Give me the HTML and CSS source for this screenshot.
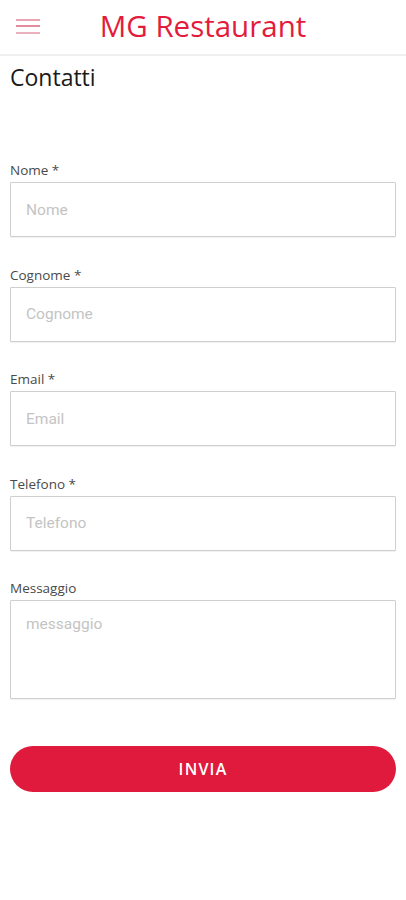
FILE: index.html
```html
<!DOCTYPE html>
<html lang="it">
<head>
<meta charset="utf-8">
<title>MG Restaurant - Contatti</title>
<link rel="stylesheet" href="styles.css">
</head>
<body>
<header class="topbar">
  <button class="menu-btn" aria-label="Menu">
    <svg width="24" height="16" viewBox="0 0 24 16"><rect x="0" y="0" width="24" height="2" fill="#e9a3b2"/><rect x="0" y="6" width="24" height="2" fill="#e38a9d"/><rect x="0" y="13" width="24" height="2" fill="#eab0bd"/></svg>
  </button>
  <h1 class="brand">MG Restaurant</h1>
</header>
<main class="page">
  <h2 class="page-title">Contatti</h2>
  <form class="contact-form">
    <div class="field">
      <label class="field-label">Nome *</label>
      <input class="field-input" type="text" placeholder="Nome">
    </div>
    <div class="field">
      <label class="field-label">Cognome *</label>
      <input class="field-input" type="text" placeholder="Cognome">
    </div>
    <div class="field">
      <label class="field-label">Email *</label>
      <input class="field-input" type="email" placeholder="Email">
    </div>
    <div class="field">
      <label class="field-label">Telefono *</label>
      <input class="field-input" type="tel" placeholder="Telefono">
    </div>
    <div class="field">
      <label class="field-label">Messaggio</label>
      <textarea class="field-input field-textarea" placeholder="messaggio"></textarea>
    </div>
    <button class="submit-btn" type="button">INVIA</button>
  </form>
</main>
</body>
</html>
```
FILE: styles.css
```css
* { box-sizing: border-box; }
html, body { margin: 0; padding: 0; background: #fff; }
body { font-family: "Open Sans", "Liberation Sans", sans-serif; color: #222; }

.topbar {
  height: 56px;
  display: flex;
  align-items: center;
  justify-content: center;
  position: relative;
  border-bottom: 2px solid #f0f0f0;
}
.menu-btn {
  position: absolute;
  left: 16px;
  top: 19px;
  background: none;
  border: 0;
  padding: 0;
  line-height: 0;
}
.brand {
  margin: 0;
  font-weight: 400;
  font-size: 29.5px;
  color: #e31b3c;
  line-height: 1;
  padding-bottom: 3px;
}

.page { padding: 0 10px; }
.page-title {
  margin: 6px 0 0;
  font-weight: 400;
  font-size: 23px;
  line-height: 30px;
  color: #1a1a1a;
}

.contact-form {
  display: flex;
  flex-direction: column;
  gap: 28.5px;
  padding-top: 69px;
}
.field { display: flex; flex-direction: column; }
.field-label {
  font-size: 13.5px;
  line-height: 18px;
  color: #4a4a4a;
  margin-bottom: 3px;
}
.field-input {
  height: 55px;
  border: 1px solid #cfcfcf;
  border-radius: 1px;
  box-shadow: 0 1px 1px rgba(0,0,0,0.06);
  padding: 0 15px;
  font-family: Roboto, "Liberation Sans", sans-serif;
  font-size: 15.5px;
  color: #333;
  background: #fff;
  outline: none;
}
.field-input::placeholder { color: #c4c4c4; }
.field-textarea {
  height: 99px;
  padding: 14px 15px;
  resize: none;
}
.submit-btn {
  margin-top: 18px;
  height: 46px;
  border: 0;
  border-radius: 23px;
  background: #e01a3c;
  color: #fff;
  font-family: "Open Sans", "Liberation Sans", sans-serif;
  font-size: 16px;
  font-weight: 600;
  letter-spacing: 1.2px;
}
```
